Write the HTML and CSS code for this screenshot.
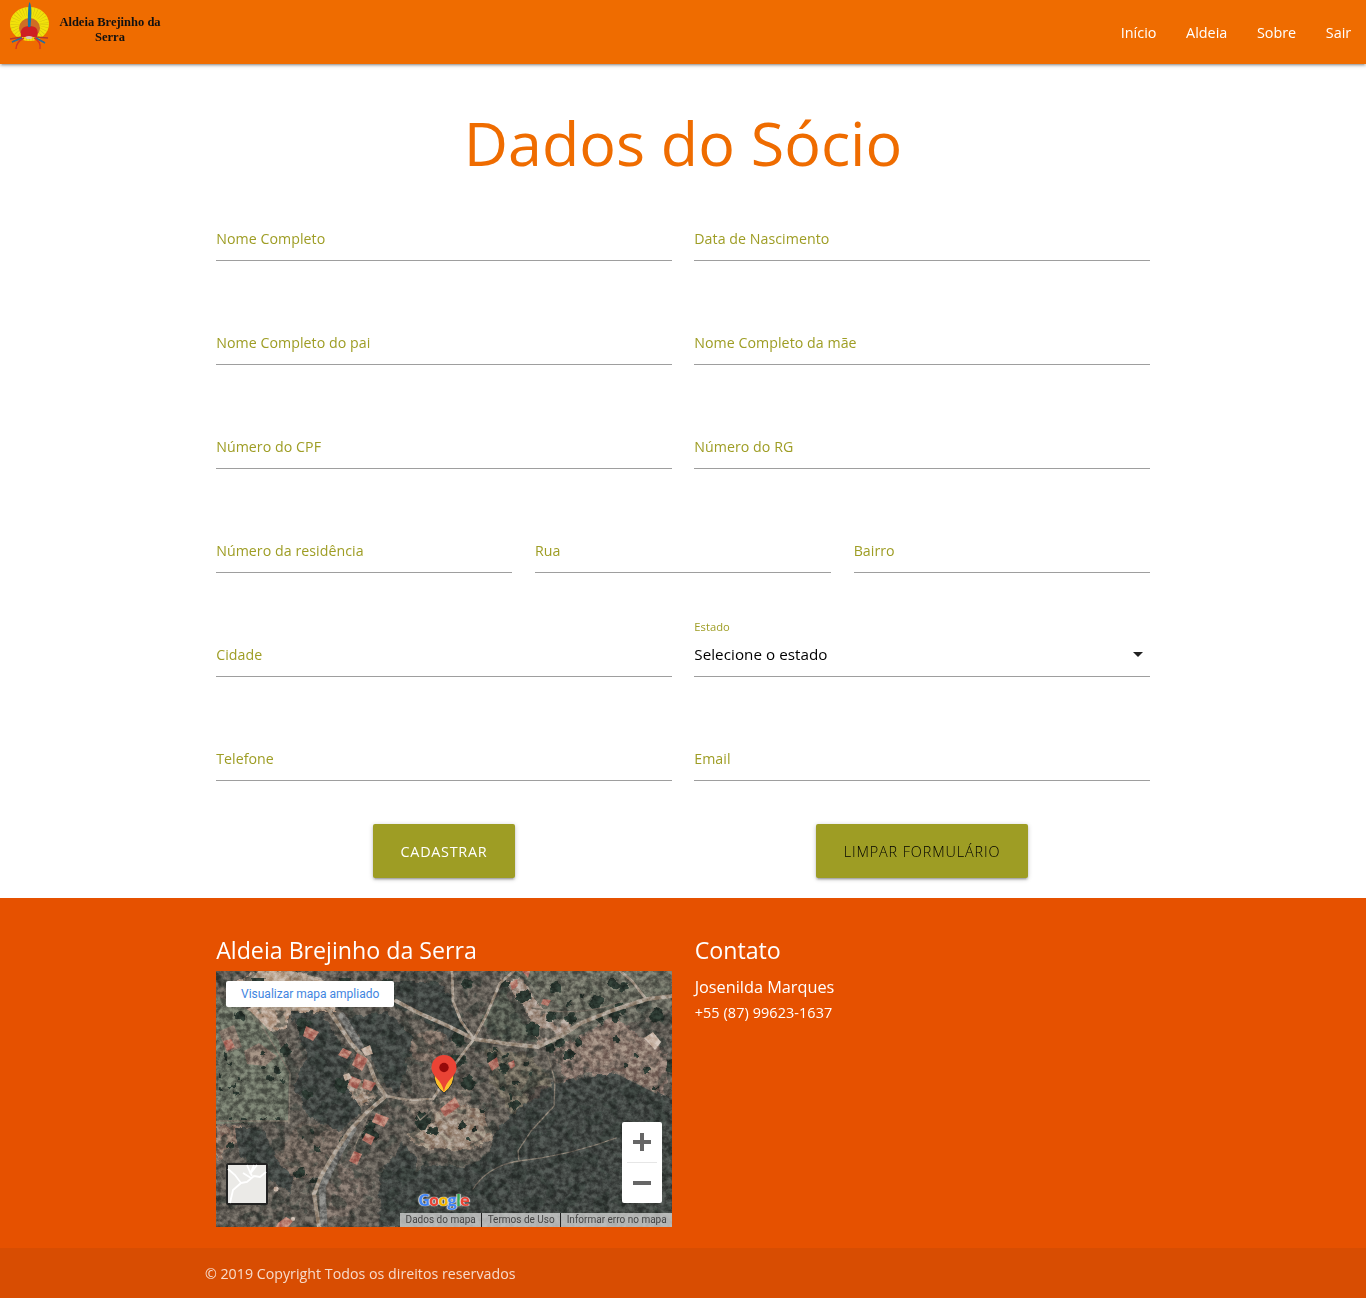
FILE: index.html
```html
<!DOCTYPE html>
<html lang="pt-BR">
<head>
<meta charset="utf-8">
<title>Aldeia Brejinho da Serra</title>
<link rel="stylesheet" href="styles.css">
</head>
<body>
<header class="navbar">
  <a class="brand" href="#">
    <svg class="brand-logo" width="42" height="52" viewBox="0 0 42 52">
      <ellipse cx="20.500" cy="24" rx="19.500" ry="17" fill="#f2e20a"/>
      <ellipse cx="20.500" cy="24" rx="14.500" ry="12.500" fill="none" stroke="#c9b914" stroke-width="9" stroke-dasharray=".4 2.200"/>
      <ellipse cx="20.500" cy="28" rx="10.500" ry="10" fill="#cf6d25"/>
      <path d="M12 37q-2-11 8.500-11T28 37z" fill="#cf1f22"/>
      <path d="M20.500 2q3 4 1 25h-2.500Q18.500 6 20.500 2z" fill="#1674a8"/>
      <path d="M16 37q4-2 8 0l-2 2h-4z" fill="#d9c4bb"/>
      <path d="M13 37L1 39M13 37L3 42M26 37l13 1M26 38l9 4" stroke="#b83627" stroke-width="1.300"/>
      <path d="M13 38l-10 4M27 38l9 5" stroke="#286f9e" stroke-width="1.500"/>
      <path d="M15 38Q7 42 7 49M25 38q7 3 6 11" fill="none" stroke="#d73524" stroke-width="1.400"/>
    </svg>
    <span class="brand-name">Aldeia Brejinho da<br>Serra</span>
  </a>
  <nav class="menu">
    <a href="#">Início</a><a href="#">Aldeia</a><a href="#">Sobre</a><a href="#">Sair</a>
  </nav>
</header>

<main class="container">
  <h1 class="title">Dados do Sócio</h1>
  <form class="form">
    <div class="row">
      <label class="field"><span>Nome Completo</span><input type="text"></label>
      <label class="field"><span>Data de Nascimento</span><input type="text"></label>
    </div>
    <div class="row">
      <label class="field"><span>Nome Completo do pai</span><input type="text"></label>
      <label class="field"><span>Nome Completo da mãe</span><input type="text"></label>
    </div>
    <div class="row">
      <label class="field"><span>Número do CPF</span><input type="text"></label>
      <label class="field"><span>Número do RG</span><input type="text"></label>
    </div>
    <div class="row">
      <label class="field"><span>Número da residência</span><input type="text"></label>
      <label class="field"><span>Rua</span><input type="text"></label>
      <label class="field"><span>Bairro</span><input type="text"></label>
    </div>
    <div class="row">
      <label class="field"><span>Cidade</span><input type="text"></label>
      <div class="field select">
        <span class="select-label">Estado</span>
        <span class="select-value">Selecione o estado</span>
        <svg class="caret" width="24" height="24" viewBox="0 0 24 24"><path d="M7 10l5 5 5-5z"/></svg>
      </div>
    </div>
    <div class="row">
      <label class="field"><span>Telefone</span><input type="text"></label>
      <label class="field"><span>Email</span><input type="text"></label>
    </div>
    <div class="actions">
      <div class="action"><button class="btn btn-submit" type="button">CADASTRAR</button></div>
      <div class="action"><button class="btn btn-reset" type="button">LIMPAR FORMULÁRIO</button></div>
    </div>
  </form>
</main>

<footer class="footer">
  <div class="container footer-columns">
    <section class="footer-col">
      <h2 class="footer-title">Aldeia Brejinho da Serra</h2>
      <div class="map">
        <svg class="satellite" width="456" height="256" viewBox="0 0 456 256">
          <defs>
            <filter id="rough" x="0" y="0" width="100%" height="100%" color-interpolation-filters="sRGB">
              <feTurbulence type="fractalNoise" baseFrequency=".13" numOctaves="3" seed="4"/>
              <feDisplacementMap in="SourceGraphic" scale="9" xChannelSelector="R" yChannelSelector="G"/>
              <feGaussianBlur stdDeviation=".6"/>
            </filter>
            <filter id="canopy" x="0" y="0" width="100%" height="100%" color-interpolation-filters="sRGB">
              <feTurbulence type="fractalNoise" baseFrequency=".071" numOctaves="4" seed="12"/>
              <feColorMatrix values="0 0 0 0 .16  0 0 0 0 .2  0 0 0 0 .18  9 0 0 0 -4.700"/>
            </filter>
            <filter id="grain" x="0" y="0" width="100%" height="100%" color-interpolation-filters="sRGB">
              <feTurbulence type="fractalNoise" baseFrequency=".173 .187" numOctaves="4" seed="31"/>
              <feColorMatrix values="2.400 0 0 0 -.7  2.400 0 0 0 -.7  2.400 0 0 0 -.7  0 0 0 0 1"/>
            </filter>
          </defs>
          <rect width="456" height="256" fill="#625d56"/>
          <g filter="url(#rough)">
            <path d="M0 153l28 3-8 16-20 18z" fill="#8c776a"/>
            <path d="M42 0h38l26 10 14 30-46 2-5 16-22 4-18-30-14-20z" fill="#b9a392"/>
            <path d="M82 152l45 5-12 45-45 10-14-20z" fill="#70655c"/>
            <path d="M118 190l22 12 14 20-22 22-28 4z" fill="#736860"/>
            <path d="M122 104l28 8 12 14-24 12z" fill="#a39182"/>
            <path d="M196 64l25-9 8 17-16 20-22-5z" fill="#77695f"/>
            <path d="M185 130l35 0 36-14-4 22-48 18z" fill="#7b7167"/>
            <path d="M192 164l40-30 34 4 12 30-25 12-38-2-20-8z" fill="#958475"/>
            <path d="M288 0h168v38L334 80l-28-14 12-28z" fill="#69695f"/>
            <path d="M284 8l22 0 24 35 30 12-38 22-12-38z" fill="#a69589"/>
            <path d="M337 80l62-35 52 38-2 52-42-22-34-12-23 10z" fill="#85736a"/>
            <path d="M268 76l45 8 22 25 6 26-44 9-20-30z" fill="#6e685b"/>
            <path d="M308 120l24-6 5 20-21 10z" fill="#504944"/>
            <path d="M264 50l24-34 14 30 20 24-34 1z" fill="#565b51"/>
          </g>
          <g filter="url(#rough)" fill="#424744">
            <path d="M284 154l54-42 62-11 66 32v133H188l8-22-8-28 20-24 40 5 22-12z"/>
            <path d="M73 38l34 6 28 44-8 20 20 34-24 18-28-12-18-34 14-30z"/>
            <path d="M18 158l28 0 14 30 18 18-6 16-26-20-22-18z"/>
            <path d="M148 10l75 0 32 52-22 8-30-27-54-15z"/>
            <path d="M132 46l40-5 26 26-16 56-14-12z"/>
            <path d="M186 170l14 18-2 68h-34l-2-48z"/>
          </g>
          <rect width="456" height="256" filter="url(#canopy)" opacity=".5"/>
          <path d="M0 25L34 40 62 68 73 100 72 150 0 153z" fill="#687061" opacity=".85"/>
          <path d="M28 80l15-8 18 13-12 10-18-2zM3 60l15-6 8 22-16 6z" fill="#8c776c" opacity=".8"/>
          <path d="M35 38l39 2 36-2 9-6-14-25-30-7H42L30 18z" fill="#bea997" opacity=".7"/>
          <path d="M345 78l54-30 45 35-3 40-40-20-34-8z" fill="#8f7b70" opacity=".6"/>
          <path d="M300 0h156v24l-58 15-32 5-25-10z" fill="#6c6d61" opacity=".65"/>
          <path d="M198 165l35-24 30 4 8 20-22 11-34-2z" fill="#a99585" opacity=".6"/>
          <g fill="none" stroke="#29352e" stroke-linecap="round" filter="url(#rough)">
            <path stroke-width="15" d="M42 8h.1M172 14h.1M86 55h.1M125 114h.1M308 25h.1M380 30h.1M442 45h.1M316 58h.1M240 90h.1M252 112h.1M243 68h.1M456 95h.1M154 164h.1M206 150h.1"/>
            <path stroke-width="10" d="M24 45h.1M251 13h.1M289 13h.1M398 13h.1M408 15h.1M384 47h.1M398 45h.1M404 38h.1M334 77h.1M344 71h.1M362 71h.1M335 46h.1M355 48h.1M118 20h.1M128 7h.1M70 80h.1M91 124h.1M128 170h.1M155 156h.1M84 202h.1M101 212h.1M217 160h.1M247 155h.1M276 88h.1M288 97h.1M299 134h.1M353 84h.1M340 17h.1"/>
            <path stroke-width="4.500" d="M10 85h.1M14 93h.1M23 108h.1M4 104h.1M17 116h.1M21 122h.1M3 118h.1M48 96h.1M54 107h.1M61 99h.1M67 110h.1M46 82h.1M14 175h.1M88 166h.1M100 177h.1M96 160h.1M279 80h.1M290 84h.1M310 91h.1M314 103h.1M300 112h.1M286 117h.1M295 125h.1M267 140h.1M258 158h.1M252 168h.1M353 32h.1M366 24h.1M437 68h.1M422 34h.1M400 68h.1M420 84h.1M430 100h.1M411 94h.1M440 117h.1M14 149h.1M29 151h.1M47 149h.1M61 149h.1"/>
          </g>
          <g fill="none" stroke="#a09385" stroke-linecap="round" stroke-linejoin="round">
            <path stroke-width="7" stroke="#737370" d="M126 45l18 30M137 158l-15 25-16 33 2 40"/>
            <path stroke-width="4" d="M110 35L135 72 153 93 160 111 170 125 150 142 133 160 120 180 105 205 98 223 103 256"/>
            <path stroke-width="4" d="M180 30l25 13 27 12 26 13 28 4 36 4 23-11 20-13 30-12 36-12 25-3"/>
            <path stroke-width="2.700" d="M258 68l12-23 14-33 14-12M258 68l-13-18-8-20-1-30M170 125l22 4 25-1 22-35 19-25M430 28L416 10 404 0"/>
            <path stroke-width="1.300" stroke="#797166" d="M332 85l7 25-1 25-23 25-13 20 1 10M257 218q15-23 46-28 52-6 97-23M192 129l12 20 24-20M138 177l18-40M0 150h72M73 152l1-50-32-54M316 37q50 10 90-7"/>
          </g>
          <g fill="#b37669">
            <path d="M141 82l11 6-6 12-10-6zM135 105l10 4-4 9-9-4zM148 108l12 4-5 8-9-3zM160 142l13 5-5 9-12-5zM150 162l9 4-4 8-9-5zM138 180l8 3-5 11-8-4zM127 77l9 4-5 7-9-4zM90 55l13 6-6 9-10-5zM294 12l7-4 1 7-6 4zM306 0h8l-2 7zM272 92l9-6 2 9-7 5zM292 92l6-3 1 6-4 3zM327 28l8 1-3 6-7-2zM224 138l15-12 5 9-15 11zM62 252l8-6 7 4-5 6H60zM7 70l8-2 4 8-8 4z"/>
          </g>
          <g fill="#c7b4a6"><path d="M145 78l9-4 3 9-8 2zM127 104l6-2 3 5-7 3zM428 67l9-6 8 10-6 8z"/><circle cx="60" cy="218" r="2.500"/><circle cx="77" cy="248" r="2"/></g>
          <rect width="456" height="256" filter="url(#grain)" class="grain"/>
        </svg>
        <a class="map-link" href="#">Visualizar mapa ampliado</a>
        <svg class="pin" width="28" height="42" viewBox="0 0 28 42">
          <path d="M4 18q-1 13 10 21 11-8 10-21z" fill="#fbc02d" stroke="#333" stroke-width="1"/>
          <path d="M14 1C7 1 1.500 6.500 1.500 13.500 1.500 23 12 25 14 38c2-13 12.500-15 12.500-24.500C26.500 6.500 21 1 14 1z" fill="#ea4335"/>
          <circle cx="14" cy="13.500" r="4.700" fill="#960a0a"/>
          <path d="M13 38v3M15.500 38v3" stroke="#444"/>
        </svg>
        <svg class="layer" width="42" height="42" viewBox="0 0 42 42">
          <rect x="1" y="1" width="40" height="40" rx="1" fill="#ebeae7" stroke="#222" stroke-width="2"/>
          <path d="M2 6l7 6 6 8-8 7-3 13M15 20l6-1 7-6 6 1 6-5M21 2l3 7 2 4M28 2l-4 9M31 2l-7 9M17 10l8 5" fill="none" stroke="#fff" stroke-width="1.800"/>
        </svg>
        <div class="google"><b class="g-blue">G</b><b class="g-red">o</b><b class="g-yellow">o</b><b class="g-blue">g</b><b class="g-green">l</b><b class="g-red">e</b></div>
        <div class="zoom">
          <svg width="40" height="81" viewBox="0 0 40 81"><path d="M11 18h18v4H11zM18 11h4v18h-4zM11 59h18v4H11z" fill="#666"/><path d="M5 40.500h30" stroke="#e6e6e6"/></svg>
        </div>
        <div class="map-terms"><span class="term-data">Dados do mapa</span><span class="term-use">Termos de Uso</span><span class="term-report">Informar erro no mapa</span></div>
      </div>
    </section>
    <section class="footer-col">
      <h2 class="footer-title">Contato</h2>
      <p class="contact-name">Josenilda Marques</p>
      <p class="contact-phone">+55 (87) 99623-1637</p>
    </section>
  </div>
  <div class="copyright"><div class="container"><span>© 2019 Copyright Todos os direitos reservados</span></div></div>
</footer>
</body>
</html>
```
FILE: styles.css
```css
* { box-sizing: border-box; }
body { margin: 0; background: #fff; font-family: "Open Sans", "Noto Sans", sans-serif; font-size: 14px; }
a { color: inherit; text-decoration: none; }
.container { width: 70%; margin: 0 auto; }
.navbar { position: relative; display: flex; justify-content: space-between; height: 64px; background: #ef6c00; box-shadow: 0 2px 2px rgba(0,0,0,.14), 0 3px 1px -2px rgba(0,0,0,.12), 0 1px 5px rgba(0,0,0,.2); }
.brand { display: flex; align-items: flex-start; padding-left: 9px; }
.brand-name { width: 118px; margin-top: 15px; text-align: center; color: #111; font: bold 12.5px/15px "Liberation Serif", serif; white-space: nowrap; }
.menu { display: flex; color: #fff; line-height: 65px; }
.menu a { padding: 0 14.8px; font-size: 14.4px; }
.title { margin: 0; height: 151px; padding-top: 34px; text-align: center; color: #ef6c00; font-size: 61px; font-weight: 400; line-height: 90px; }
.form { color: #9e9d24; }
.row { display: flex; height: 104px; }
.row .field { flex: 1 1 0; min-width: 0; margin: 0 11.25px; }
.field { position: relative; display: flex; align-items: center; height: 46px; padding-top: 1px; border-bottom: 1px solid #9e9e9e; font-size: 14.2px; font-weight: 400; letter-spacing: .05px; white-space: nowrap; }
.field input { flex: 1; width: 0; min-width: 0; height: 40px; padding: 0; border: 0; outline: 0; background: transparent; }
.select { justify-content: space-between; }
.select-label { position: absolute; top: -12px; font-size: 11.2px; line-height: 16px; }
.select-value { color: #000; font-size: 15.2px; letter-spacing: .05px; }
.caret { fill: #212121; }
.actions { display: flex; margin-top: -15px; height: 74px; }
.action { flex: 1; display: flex; justify-content: center; align-items: flex-start; }
.btn { height: 54px; border: 0; border-radius: 2px; background: #9e9d24; font: 400 14.4px "Open Sans", sans-serif; box-shadow: 0 2px 2px rgba(0,0,0,.14), 0 3px 1px -2px rgba(0,0,0,.12), 0 1px 5px rgba(0,0,0,.2); }
.btn-submit { width: 142px; color: #fff; letter-spacing: .7px; }
.btn-reset { width: 212px; color: #000; font-weight: 300; letter-spacing: .9px; }
.footer { height: 400px; background: #e65100; color: #fff; }
.footer-columns { display: flex; height: 350px; }
.footer-col { flex: 1; padding: 35px 11.25px 0; }
.footer-title { margin: 0; height: 38px; font-size: 23.2px; font-weight: 400; line-height: 34px; white-space: nowrap; }
.map { position: relative; width: 456px; height: 256px; overflow: hidden; font-family: Roboto, sans-serif; }
.satellite { display: block; }
.grain { mix-blend-mode: overlay; opacity: .3; }
.map-link { position: absolute; left: 10px; top: 10px; width: 168px; height: 26px; border-radius: 2px; background: #fff; color: #4285e0; text-align: center; font-size: 12px; line-height: 26px; }
.pin { position: absolute; left: 214px; top: 83px; }
.layer { position: absolute; left: 10px; top: 192px; }
.google { position: absolute; left: 202px; top: 218px; font: 16.5px/22px "Open Sans", sans-serif; letter-spacing: -1px; text-shadow: 0 0 1px #ddd, 1px 0 1px #ddd, -1px 0 1px #ddd; }
.g-blue { color: #4285f4; }
.g-red { color: #ea4335; }
.g-yellow { color: #f2b600; }
.g-green { color: #34a853; }
.zoom { position: absolute; right: 10px; top: 151px; width: 40px; height: 81px; border-radius: 2px; background: #fff; }
.map-terms { position: absolute; right: 0; bottom: 0; display: flex; height: 14px; color: #444; font-size: 10px; line-height: 14px; text-align: center; white-space: nowrap; }
.map-terms span { background: rgba(225,225,225,.72); }
.map-terms span + span { border-left: 1px solid #222; }
.term-data { width: 81px; }
.term-use { width: 79px; }
.term-report { width: 112px; }
.contact-name { margin: 4px 0 0; font-size: 16.3px; line-height: 24px; }
.contact-phone { margin: 2px 0 0; font-size: 14.4px; line-height: 24px; letter-spacing: .1px; }
.copyright { height: 50px; background: #d84d02; color: rgba(255,255,255,.8); font-size: 14.2px; line-height: 51px; letter-spacing: .03px; }
```
